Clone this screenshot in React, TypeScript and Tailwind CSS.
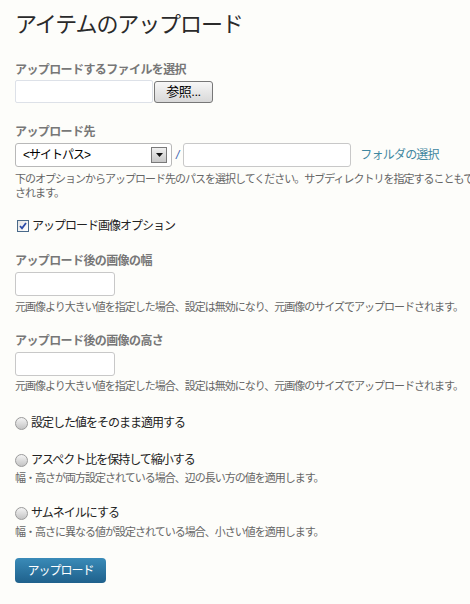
import React from "react";

const help = "text-[11px] leading-[14px] tracking-[-1px] text-[#666] whitespace-nowrap";
const label = "text-[12px] leading-[16px] font-bold tracking-[-0.6px] text-[#777]";
const body = "text-[12px] leading-[16px] tracking-[-1px] text-[#222]";

function Radio() {
  return (
    <span className="inline-block w-[13px] h-[13px] rounded-full border border-[#9a9a9a] bg-gradient-to-b from-[#f4f4f4] to-[#c4c4c4] shrink-0" />
  );
}

function RadioRow({ text }: { text: string }) {
  return (
    <div className="flex items-center gap-[3px] h-[16px]">
      <Radio />
      <span className={body}>{text}</span>
    </div>
  );
}

export default function App() {
  return (
    <div className="w-[470px] h-[604px] overflow-hidden bg-[#fdfdfa] px-[15px] font-['Liberation_Sans','Noto_Sans_CJK_JP',sans-serif]">
      <h1 className="pt-[11px] h-[39px] text-[22px] leading-[28px] tracking-[-1.1px] text-[#2a2a2a] font-normal">
        アイテムのアップロード
      </h1>

      <div className={`${label} mt-[23px]`}>アップロードするファイルを選択</div>
      <div className="mt-[2px] flex items-center h-[23px] gap-[1px]">
        <div className="w-[138px] h-[23px] border border-[#dde1e8] bg-white rounded-[2px]" />
        <div className="w-[59px] h-[22px] border border-[#777] rounded-[3px] bg-gradient-to-b from-[#f7f7f7] to-[#d8d8d8] flex items-center justify-center text-[13px] tracking-[-0.5px] text-black">
          参照...
        </div>
      </div>

      <div className={`${label} mt-[21px]`}>アップロード先</div>
      <div className="mt-[2px] flex items-center h-[25px]">
        <div className="w-[157px] h-[24px] border border-[#b8b8b8] rounded-[3px] bg-white flex items-center justify-between pl-[7px] pr-[4px]">
          <span className="text-[12px] tracking-[-1px] text-black">&lt;サイトパス&gt;</span>
          <span className="w-[16px] h-[16px] border border-[#7a7a7a] bg-gradient-to-b from-[#f0f0f0] to-[#c8c8c8] flex items-center justify-center">
            <svg width="7" height="4" viewBox="0 0 7 4"><path d="M0 0h7L3.5 4z" fill="#111" /></svg>
          </span>
        </div>
        <span className="ml-[4px] text-[12px] italic text-[#3a62b0]">/</span>
        <div className="ml-[4px] w-[168px] h-[24px] border border-[#c8c8c8] rounded-[3px] bg-white" />
        <a className="ml-[9px] text-[12px] tracking-[-0.8px] text-[#3f87a0] whitespace-nowrap">フォルダの選択</a>
      </div>
      <div className={`${help} mt-[5px]`}>
        下のオプションからアップロード先のパスを選択してください。サブディレクトリを指定することもできます。存在しない場合は作成
        <br />
        されます。
      </div>

      <div className="mt-[18px] flex items-center gap-[3px] h-[16px]">
        <span className="w-[12px] h-[12px] border border-[#4a6a8a] bg-gradient-to-br from-[#e4e4e4] to-white flex items-center justify-center ml-[2px]">
          <svg width="8" height="8" viewBox="0 0 8 8"><path d="M1 4l2 2.3L7 1" stroke="#2a4aa8" strokeWidth="1.8" fill="none" /></svg>
        </span>
        <span className={body}>アップロード画像オプション</span>
      </div>

      <div className={`${label} mt-[19px]`}>アップロード後の画像の幅</div>
      <div className="mt-[3px] w-[100px] h-[24px] border border-[#c8c8c8] rounded-[3px] bg-white" />
      <div className={`${help} mt-[4px]`}>元画像より大きい値を指定した場合、設定は無効になり、元画像のサイズでアップロードされます。</div>

      <div className={`${label} mt-[19px]`}>アップロード後の画像の高さ</div>
      <div className="mt-[3px] w-[100px] h-[24px] border border-[#c8c8c8] rounded-[3px] bg-white" />
      <div className={`${help} mt-[3px]`}>元画像より大きい値を指定した場合、設定は無効になり、元画像のサイズでアップロードされます。</div>

      <div className="mt-[22px]"><RadioRow text="設定した値をそのまま適用する" /></div>

      <div className="mt-[21px]"><RadioRow text="アスペクト比を保持して縮小する" /></div>
      <div className={`${help} mt-[3px]`}>幅・高さが両方設定されている場合、辺の長い方の値を適用します。</div>

      <div className="mt-[20px]"><RadioRow text="サムネイルにする" /></div>
      <div className={`${help} mt-[4px]`}>幅・高さに異なる値が設定されている場合、小さい値を適用します。</div>

      <button className="mt-[19px] w-[91px] h-[25px] rounded-[4px] bg-gradient-to-b from-[#3a8bb8] to-[#1f618c] text-white text-[12px] tracking-[-1px] flex items-center justify-center">
        アップロード
      </button>
    </div>
  );
}
